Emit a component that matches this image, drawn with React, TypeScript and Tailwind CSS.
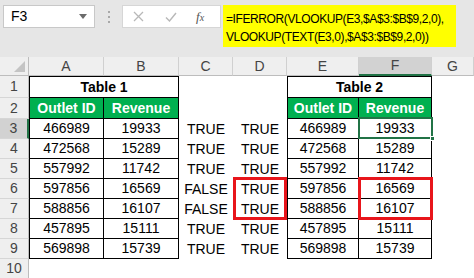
import React from "react";

const t1: [string, string][] = [
  ["466989", "19933"],
  ["472568", "15289"],
  ["557992", "11742"],
  ["597856", "16569"],
  ["588856", "16107"],
  ["457895", "15111"],
  ["569898", "15739"],
];
const cVals = ["TRUE", "TRUE", "TRUE", "FALSE", "FALSE", "TRUE", "TRUE"];

const font = { fontFamily: '"Liberation Sans", Arial, sans-serif' };

function ColHead({ label, active }: { label: string; active?: boolean }) {
  return (
    <div
      className={
        "flex items-center justify-center text-[14px] text-[#444] border-r border-[#d0d0d0] " +
        (active ? "bg-[#d2d2d2] border-b-2 border-b-[#217346]" : "bg-[#efefef] border-b border-b-[#bdbdbd]")
      }
    >
      {label}
    </div>
  );
}

function RowHead({ n, active }: { n: number; active?: boolean }) {
  return (
    <div
      className={
        "flex items-center justify-center text-[14px] text-[#444] border-b border-[#d6d6d6] " +
        (active ? "bg-[#d2d2d2] border-r-2 border-r-[#217346]" : "bg-[#efefef] border-r border-r-[#bdbdbd]")
      }
    >
      {n}
    </div>
  );
}

export default function App() {
  const rows: React.ReactNode[] = [];

  rows.push(
    <RowHead key="r1" n={1} />,
    <div key="a1" className="col-span-2 flex items-center justify-center font-bold text-[14px] border border-black">Table 1</div>,
    <div key="c1" />,
    <div key="d1" />,
    <div key="e1" className="col-span-2 flex items-center justify-center font-bold text-[14px] border border-black">Table 2</div>,
    <div key="g1" />
  );
  rows.push(
    <RowHead key="r2" n={2} />,
    <div key="a2" className="flex items-center justify-center font-bold text-[14px] text-white bg-[#00b050] border-l border-r border-b border-black">Outlet ID</div>,
    <div key="b2" className="flex items-center justify-center font-bold text-[14px] text-white bg-[#00b050] border-r border-b border-black">Revenue</div>,
    <div key="c2" />,
    <div key="d2" />,
    <div key="e2" className="flex items-center justify-center font-bold text-[14px] text-white bg-[#00b050] border-l border-r border-b border-black">Outlet ID</div>,
    <div key="f2" className="flex items-center justify-center font-bold text-[14px] text-white bg-[#00b050] border-r border-b border-black">Revenue</div>,
    <div key="g2" />
  );
  t1.forEach(([id, rev], i) => {
    const r = i + 3;
    rows.push(
      <RowHead key={"r" + r} n={r} active={r === 3} />,
      <div key={"a" + r} className="flex items-center justify-center text-[14px] border-l border-r border-b border-black">{id}</div>,
      <div key={"b" + r} className="flex items-center justify-center text-[14px] border-r border-b border-black">{rev}</div>,
      <div key={"c" + r} className="flex items-center justify-center text-[14px]">{cVals[i]}</div>,
      <div key={"d" + r} className="flex items-center justify-center text-[14px]">TRUE</div>,
      <div key={"e" + r} className="flex items-center justify-center text-[14px] border-l border-r border-b border-black">{id}</div>,
      <div key={"f" + r} className="flex items-center justify-center text-[14px] border-r border-b border-black">{rev}</div>,
      <div key={"g" + r} />
    );
  });
  rows.push(
    <RowHead key="r10" n={10} />,
    <div key="rest10" className="col-span-7" />
  );

  return (
    <div className="w-[474px] h-[278px] overflow-hidden bg-white text-black" style={font}>
      <div className="h-[57px] bg-[#e6e6e6] flex items-start pt-[5px] pl-[3px]">
        <div className="w-[92px] h-[23px] bg-white border border-[#c8c8c8] flex items-center justify-between pl-[7px] pr-[7px]">
          <span className="text-[14px]">F3</span>
          <svg width="8" height="5" viewBox="0 0 8 5">
            <path d="M0 0 L8 0 L4 5 Z" fill="#6b6b6b" />
          </svg>
        </div>
        <div className="w-[27px] h-[23px] flex flex-col items-center justify-center gap-[3px]">
          <div className="w-[2px] h-[2px] bg-[#a8a8a8]" />
          <div className="w-[2px] h-[2px] bg-[#a8a8a8]" />
          <div className="w-[2px] h-[2px] bg-[#a8a8a8]" />
        </div>
        <div className="w-[99px] h-[23px] bg-white border border-[#d6d6d6] flex items-center">
          <svg className="ml-[10px]" width="11" height="11" viewBox="0 0 11 11">
            <path d="M1 1 L10 10 M10 1 L1 10" stroke="#b8b8b8" strokeWidth="1.3" />
          </svg>
          <svg className="ml-[21px]" width="12" height="10" viewBox="0 0 12 10">
            <path d="M1 5.5 L4.5 9 L11 1" stroke="#b8b8b8" strokeWidth="1.4" fill="none" />
          </svg>
          <span className="ml-[19px] text-[13px] italic text-[#555]" style={{ fontFamily: '"Liberation Serif", serif' }}>
            f<span className="text-[10px]">x</span>
          </span>
        </div>
        <div className="ml-[2px] w-[233px] h-[42px] bg-[#ffff00] pl-[3px] pt-[5px] text-[12px] leading-[18px] tracking-[-0.4px] text-black whitespace-nowrap">
          <div>=IFERROR(VLOOKUP(E3,$A$3:$B$9,2,0),</div>
          <div>VLOOKUP(TEXT(E3,0),$A$3:$B$9,2,0))</div>
        </div>
      </div>

      <div className="relative">
        <div className="grid grid-cols-[29px_75px_75px_54px_54px_72px_73px_42px] grid-rows-[19px_22px_21px_20px_20px_20px_20px_20px_20px_20px_20px]">
          <div className="bg-[#efefef] border-r border-b border-[#bdbdbd] flex items-end justify-end pr-[3px] pb-[3px]">
            <svg width="11" height="11" viewBox="0 0 11 11">
              <path d="M11 0 L11 11 L0 11 Z" fill="#c4c4c4" />
            </svg>
          </div>
          <ColHead label="A" />
          <ColHead label="B" />
          <ColHead label="C" />
          <ColHead label="D" />
          <ColHead label="E" />
          <ColHead label="F" active />
          <ColHead label="G" />
          {rows}
        </div>
        <div className="absolute left-[358px] top-[60px] w-[75px] h-[22px] border-2 border-[#217346]" />
        <div className="absolute left-[430px] top-[79px] w-[5px] h-[5px] bg-[#217346] border border-white" />
        <div className="absolute left-[233px] top-[120px] w-[54px] h-[43px] border-[3px] border-[#e8151b]" />
        <div className="absolute left-[358px] top-[120px] w-[75px] h-[43px] border-[3px] border-[#e8151b]" />
      </div>
    </div>
  );
}
